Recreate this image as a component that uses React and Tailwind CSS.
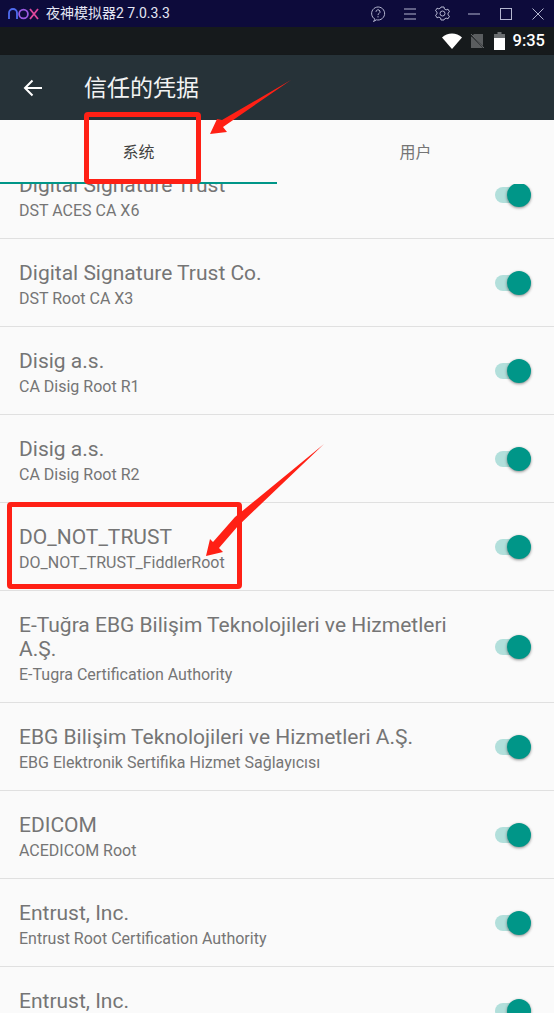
// App.jsx - trusted credentials screen inside the Nox emulator window
const certs = [
  { title: 'Digital Signature Trust', sub: 'DST ACES CA X6' },
  { title: 'Digital Signature Trust Co.', sub: 'DST Root CA X3' },
  { title: 'Disig a.s.', sub: 'CA Disig Root R1' },
  { title: 'Disig a.s.', sub: 'CA Disig Root R2' },
  { title: 'DO_NOT_TRUST', sub: 'DO_NOT_TRUST_FiddlerRoot' },
  { title: 'E-Tuğra EBG Bilişim Teknolojileri ve Hizmetleri A.Ş.', sub: 'E-Tugra Certification Authority' },
  { title: 'EBG Bilişim Teknolojileri ve Hizmetleri A.Ş.', sub: 'EBG Elektronik Sertifika Hizmet Sağlayıcısı' },
  { title: 'EDICOM', sub: 'ACEDICOM Root' },
  { title: 'Entrust, Inc.', sub: 'Entrust Root Certification Authority' },
  { title: 'Entrust, Inc.' },
];

const Toggle = () => (
  <div className="relative h-[24px] w-[36px] shrink-0">
    <div className="absolute left-0 top-[4px] h-[16px] w-[32px] rounded-full bg-[#b2dfdb]" />
    <div className="absolute left-[12px] top-0 h-[24px] w-[24px] rounded-full bg-[#009688] shadow-[0_1px_3px_rgba(0,0,0,0.45)]" />
  </div>
);

const CertRow = ({ title, sub }) => (
  <div className="flex min-h-[88px] items-center border-b border-[#e0e0e0] pl-[19px] pr-[23px]">
    <div className="min-w-0 flex-1 self-start pb-[15px] pr-[36px] pt-[22px]">
      <div className="text-[21px] leading-[24px] text-[#757575]">{title}</div>
      {sub && <div className="mt-[2px] text-[16px] leading-[24px] text-[#757575]">{sub}</div>}
    </div>
    <Toggle />
  </div>
);

const TitleBar = () => (
  <div className="flex h-[27px] items-center bg-[#0d0b3b] pl-[8px] pr-[10px] text-[#b4b6d0]">
    <svg width="31" height="12" viewBox="0 0 31 12" fill="none" strokeWidth="1.8">
      <path d="M1 11V5a4 4 0 0 1 8 0v6" stroke="#4f6cf0" />
      <circle cx="15.5" cy="6" r="4.4" stroke="#9a5ae0" />
      <path d="M22 1l8 10M30 1l-8 10" stroke="#e0489c" />
    </svg>
    <span className="ml-[7px] text-[14px] text-[#e4e6f4]">夜神模拟器2 7.0.3.3</span>
    <div className="ml-auto flex items-center">
      <svg width="16" height="16" viewBox="0 0 16 16" fill="none" stroke="currentColor">
        <path d="M5 13.2A6.5 6.5 0 1 1 8 14a6.5 6.5 0 0 1-1.5-.2L3.5 15.5z" />
        <path d="M6 5.8a2 2 0 1 1 3 1.7c-.7.4-1 .8-1 1.6M8 10.2v1.2" />
      </svg>
      <svg width="12" height="12" viewBox="0 0 12 12" fill="none" stroke="currentColor" className="ml-[18px]">
        <path d="M0 1h12M0 6h12M0 11h12" />
      </svg>
      <svg width="15" height="15" viewBox="0 0 15 15" fill="none" stroke="currentColor" className="ml-[19px]">
        <path d="M6 1h3l.4 2 1.7.9 1.9-.7 1.5 2.6-1.5 1.3v1.8l1.5 1.3-1.5 2.6-1.9-.7-1.7.9L9 14H6l-.4-2-1.7-.9-1.9.7L.5 9.2 2 7.9V6.1L.5 4.8 2 2.2l1.9.7L5.6 2z" />
        <circle cx="7.5" cy="7.5" r="2.5" />
      </svg>
      <svg width="12" height="2" viewBox="0 0 12 2" stroke="currentColor" className="ml-[18px]">
        <path d="M0 1h12" />
      </svg>
      <svg width="12" height="12" viewBox="0 0 12 12" fill="none" stroke="currentColor" className="ml-[20px]">
        <rect x="0.5" y="0.5" width="11" height="11" />
      </svg>
      <svg width="12" height="12" viewBox="0 0 12 12" fill="none" stroke="currentColor" className="ml-[20px]">
        <path d="M0.5 0.5l11 11M11.5 0.5l-11 11" />
      </svg>
    </div>
  </div>
);

const StatusBar = () => (
  <div className="flex h-[28px] items-center justify-end bg-[#161a1c] pr-[9px] text-white">
    <svg width="20" height="16" viewBox="0 0 20 16" fill="white">
      <path d="M0 4.5C2.8 2 6.2.5 10 .5s7.2 1.5 10 4L10 16z" />
    </svg>
    <svg width="14" height="16" viewBox="0 0 14 16" className="ml-[8px]">
      <path d="M4 1h9v14H1V4z" fill="#5a5d5f" />
      <path d="M0 1l14 14" stroke="#161a1c" strokeWidth="1.5" />
      <path d="M1 1l13 14" stroke="#8a8c8e" strokeWidth="0.7" />
    </svg>
    <svg width="11" height="18" viewBox="0 0 11 18" className="ml-[10px]">
      <path d="M3.5 0h4v2H11v16H0V2h3.5z" fill="#6b6e70" />
      <rect y="6" width="11" height="12" fill="white" />
    </svg>
    <span className="ml-[8px] font-['Roboto',sans-serif] text-[16.5px] font-medium">9:35</span>
  </div>
);

const Toolbar = () => (
  <div className="relative z-10 flex h-[65px] items-center bg-[#263238] shadow-[0_2px_3px_rgba(0,0,0,0.3)]">
    <svg width="20" height="18" viewBox="0 0 20 18" fill="none" stroke="white" strokeWidth="2" className="ml-[23px]">
      <path d="M19 9H2M9.5 1.5L2 9l7.5 7.5" />
    </svg>
    <span className="ml-[41px] pt-[3px] text-[23px] text-[#f2f3f3]">信任的凭据</span>
  </div>
);

const Tabs = () => (
  <div className="relative z-10 flex h-[64px] bg-[#fafafa] text-[16px]">
    <div className="flex flex-1 items-center justify-center pt-[2px] text-[#424242]">系统</div>
    <div className="flex flex-1 items-center justify-center pt-[2px] text-[#757575]">用户</div>
    <div className="absolute bottom-0 left-0 h-[2px] w-[277px] bg-[#009688]" />
  </div>
);

// red annotations drawn over the screenshot
const Annotations = () => (
  <div className="pointer-events-none absolute inset-0 z-20">
    <div className="absolute left-[84px] top-[112px] h-[72px] w-[117px] rounded-[4px] border-[5px] border-[#ff2015]" />
    <div className="absolute left-[7px] top-[502px] h-[87px] w-[235px] rounded-[4px] border-[5px] border-[#ff2015]" />
    <svg width="554" height="1013" viewBox="0 0 554 1013" className="absolute left-0 top-0">
      <path d="M291 80L222 120L217 119L210 134L227 132L223 127Z" fill="#ff2015" />
      <path d="M324 444L235 517L213 542L210 539L206 556L223 552L219 548L238 526Z" fill="#ff2015" />
    </svg>
  </div>
);

export default function App() {
  return (
    <div className="relative flex h-[1013px] w-[554px] flex-col overflow-hidden bg-[#fafafa] font-['Roboto','Noto_Sans_CJK_SC',sans-serif]">
      <TitleBar />
      <StatusBar />
      <Toolbar />
      <Tabs />
      <div className="min-h-0 flex-1 overflow-hidden">
        <div className="mt-[-33px]">
          {certs.map((c, i) => (
            <CertRow key={i} title={c.title} sub={c.sub} />
          ))}
        </div>
      </div>
      <Annotations />
    </div>
  );
}
